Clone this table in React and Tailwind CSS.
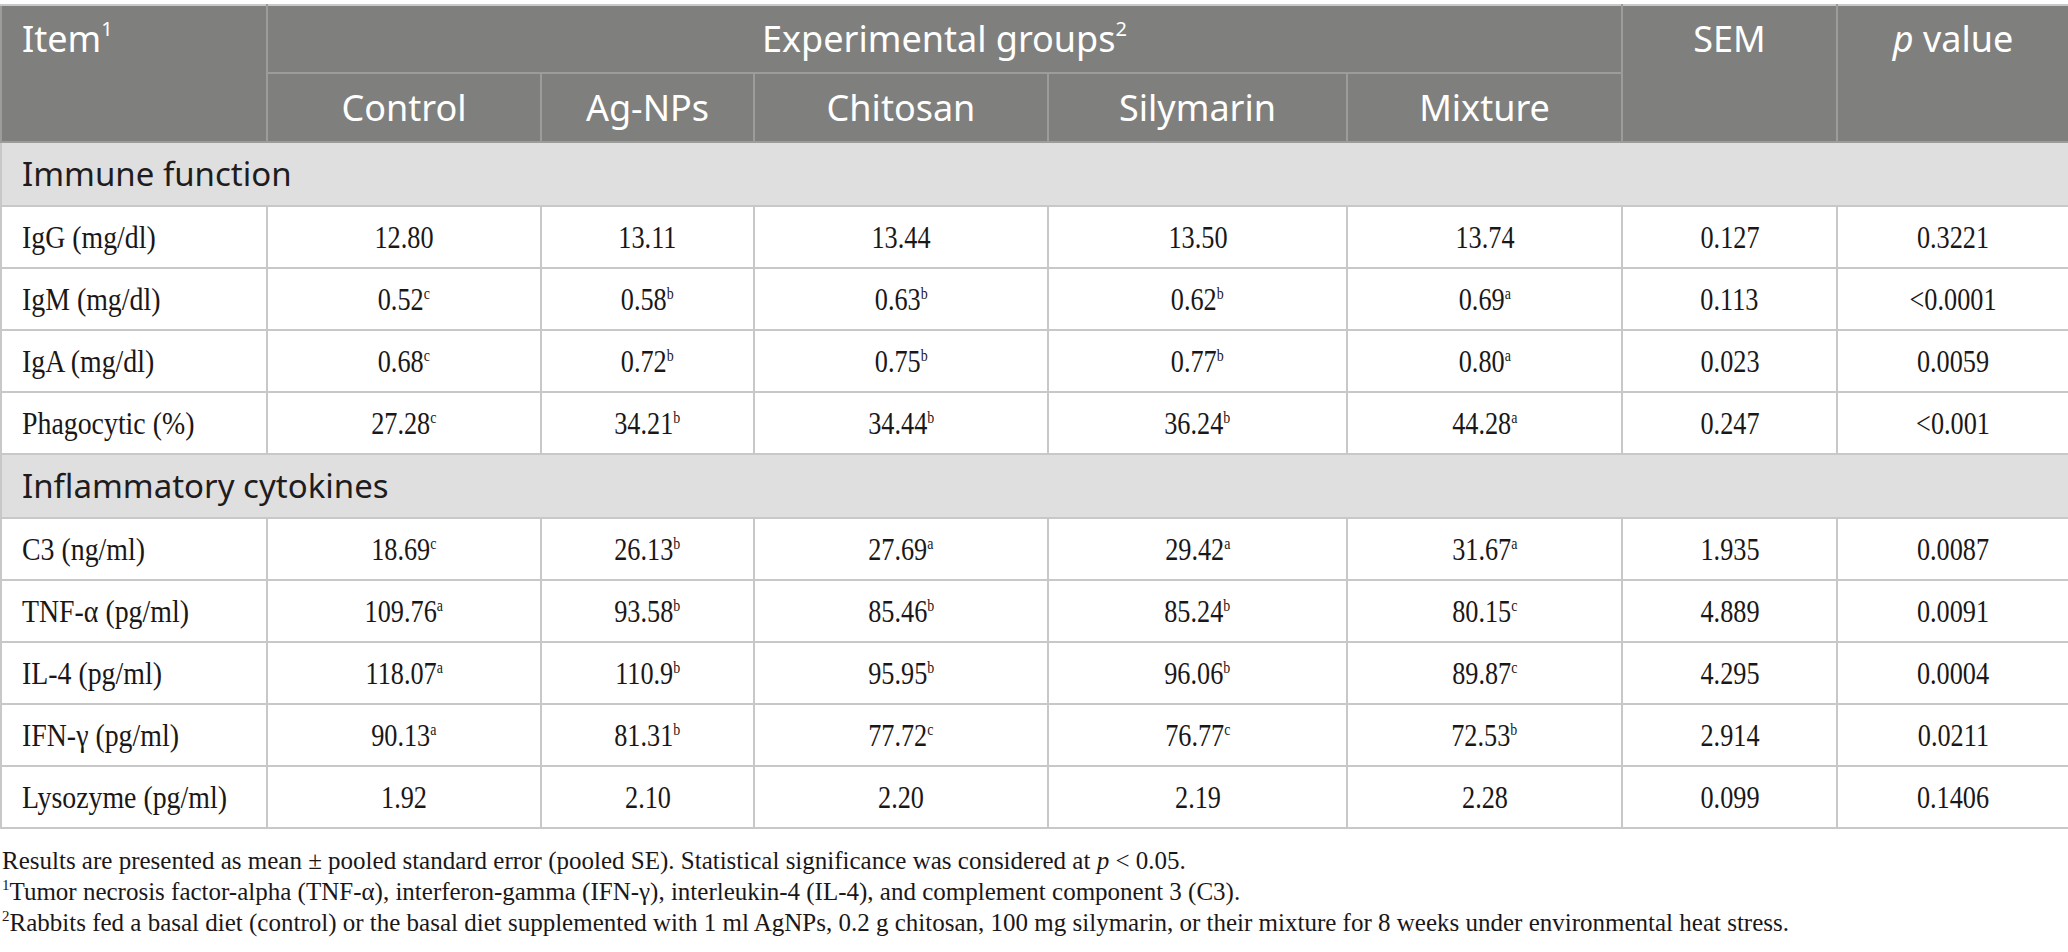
const groups = ["Control", "Ag-NPs", "Chitosan", "Silymarin", "Mixture"];

const sections = [
  {
    title: "Immune function",
    rows: [
      ["IgG (mg/dl)", ["12.80", ""], ["13.11", ""], ["13.44", ""], ["13.50", ""], ["13.74", ""], "0.127", "0.3221"],
      ["IgM (mg/dl)", ["0.52", "c"], ["0.58", "b"], ["0.63", "b"], ["0.62", "b"], ["0.69", "a"], "0.113", "<0.0001"],
      ["IgA (mg/dl)", ["0.68", "c"], ["0.72", "b"], ["0.75", "b"], ["0.77", "b"], ["0.80", "a"], "0.023", "0.0059"],
      ["Phagocytic (%)", ["27.28", "c"], ["34.21", "b"], ["34.44", "b"], ["36.24", "b"], ["44.28", "a"], "0.247", "<0.001"],
    ],
  },
  {
    title: "Inflammatory cytokines",
    rows: [
      ["C3 (ng/ml)", ["18.69", "c"], ["26.13", "b"], ["27.69", "a"], ["29.42", "a"], ["31.67", "a"], "1.935", "0.0087"],
      ["TNF-α (pg/ml)", ["109.76", "a"], ["93.58", "b"], ["85.46", "b"], ["85.24", "b"], ["80.15", "c"], "4.889", "0.0091"],
      ["IL-4 (pg/ml)", ["118.07", "a"], ["110.9", "b"], ["95.95", "b"], ["96.06", "b"], ["89.87", "c"], "4.295", "0.0004"],
      ["IFN-γ (pg/ml)", ["90.13", "a"], ["81.31", "b"], ["77.72", "c"], ["76.77", "c"], ["72.53", "b"], "2.914", "0.0211"],
      ["Lysozyme (pg/ml)", ["1.92", ""], ["2.10", ""], ["2.20", ""], ["2.19", ""], ["2.28", ""], "0.099", "0.1406"],
    ],
  },
];

const headCell = "bg-[#7f807e] text-white font-normal border-2 border-[#9c9d9b]";
const bodyCell = "border-2 border-[#c8c8c8] text-center";

// the source table uses a condensed serif, so squeeze Liberation Serif a bit
const Num = ({ value, sup }) => (
  <span className="inline-block scale-x-[0.82] leading-[40px]">
    {value}
    {sup && <sup className="text-[17px] -top-[0.65em]">{sup}</sup>}
  </span>
);

const App = () => {
  return (
    <div className="w-[2068px] h-[952px] bg-white pt-[4px] overflow-hidden">
      <table className="w-[2068px] table-fixed border-collapse">
        <colgroup>
          <col className="w-[266px]" />
          <col className="w-[274px]" />
          <col className="w-[213px]" />
          <col className="w-[294px]" />
          <col className="w-[299px]" />
          <col className="w-[275px]" />
          <col className="w-[215px]" />
          <col className="w-[232px]" />
        </colgroup>
        <thead className="font-['Noto_Sans',sans-serif] text-[36px]">
          <tr className="h-[68px]">
            <th rowSpan={2} className={`${headCell} border-t-[#c8c8c8] align-top text-left pl-[20px] pt-[6px]`}>
              Item<sup className="text-[20px] -top-[0.8em]">1</sup>
            </th>
            <th colSpan={5} className={`${headCell} border-t-[#c8c8c8] text-center`}>
              Experimental groups<sup className="text-[20px] -top-[0.8em]">2</sup>
            </th>
            <th rowSpan={2} className={`${headCell} border-t-[#c8c8c8] align-top text-center pt-[6px]`}>
              SEM
            </th>
            <th rowSpan={2} className={`${headCell} border-t-[#c8c8c8] align-top text-center pt-[6px]`}>
              <i>p</i> value
            </th>
          </tr>
          <tr className="h-[69px]">
            {groups.map((g) => (
              <th key={g} className={`${headCell} text-center`}>
                {g}
              </th>
            ))}
          </tr>
        </thead>
        <tbody className="font-['Liberation_Serif',serif] text-[32px] leading-[40px] text-[#1a1718]">
          {sections.map((s) => (
            <>
              <tr key={s.title} className="h-[64px] bg-[#e0dfe0]">
                <td
                  colSpan={8}
                  className="border-2 border-[#c8c8c8] pl-[20px] font-['Noto_Sans',sans-serif] text-[33px] leading-[44px] text-[#1f1c1d]"
                >
                  {s.title}
                </td>
              </tr>
              {s.rows.map((r) => (
                <tr key={r[0]} className="h-[62px]">
                  <td className="border-2 border-[#c8c8c8] pl-[20px] text-left whitespace-nowrap">
                    <span className="inline-block scale-x-[0.87] origin-left">{r[0]}</span>
                  </td>
                  {r.slice(1, 6).map(([v, sup], i) => (
                    <td key={i} className={bodyCell}>
                      <Num value={v} sup={sup} />
                    </td>
                  ))}
                  <td className={bodyCell}>
                    <Num value={r[6]} />
                  </td>
                  <td className={bodyCell}>
                    <Num value={r[7]} />
                  </td>
                </tr>
              ))}
            </>
          ))}
        </tbody>
      </table>

      <div className="pt-[16px] pl-[2px] font-['Liberation_Serif',serif] text-[25px] leading-[31px] text-[#1a1718]">
        <p>
          Results are presented as mean ± pooled standard error (pooled SE). Statistical significance was considered at{" "}
          <i>p</i> &lt; 0.05.
        </p>
        <p>
          <sup className="text-[15px] -top-[0.7em]">1</sup>Tumor necrosis factor-alpha (TNF-α), interferon-gamma (IFN-γ),
          interleukin-4 (IL-4), and complement component 3 (C3).
        </p>
        <p>
          <sup className="text-[15px] -top-[0.7em]">2</sup>Rabbits fed a basal diet (control) or the basal diet supplemented
          with 1 ml AgNPs, 0.2 g chitosan, 100 mg silymarin, or their mixture for 8 weeks under environmental heat stress.
        </p>
      </div>
    </div>
  );
};

export default App;
